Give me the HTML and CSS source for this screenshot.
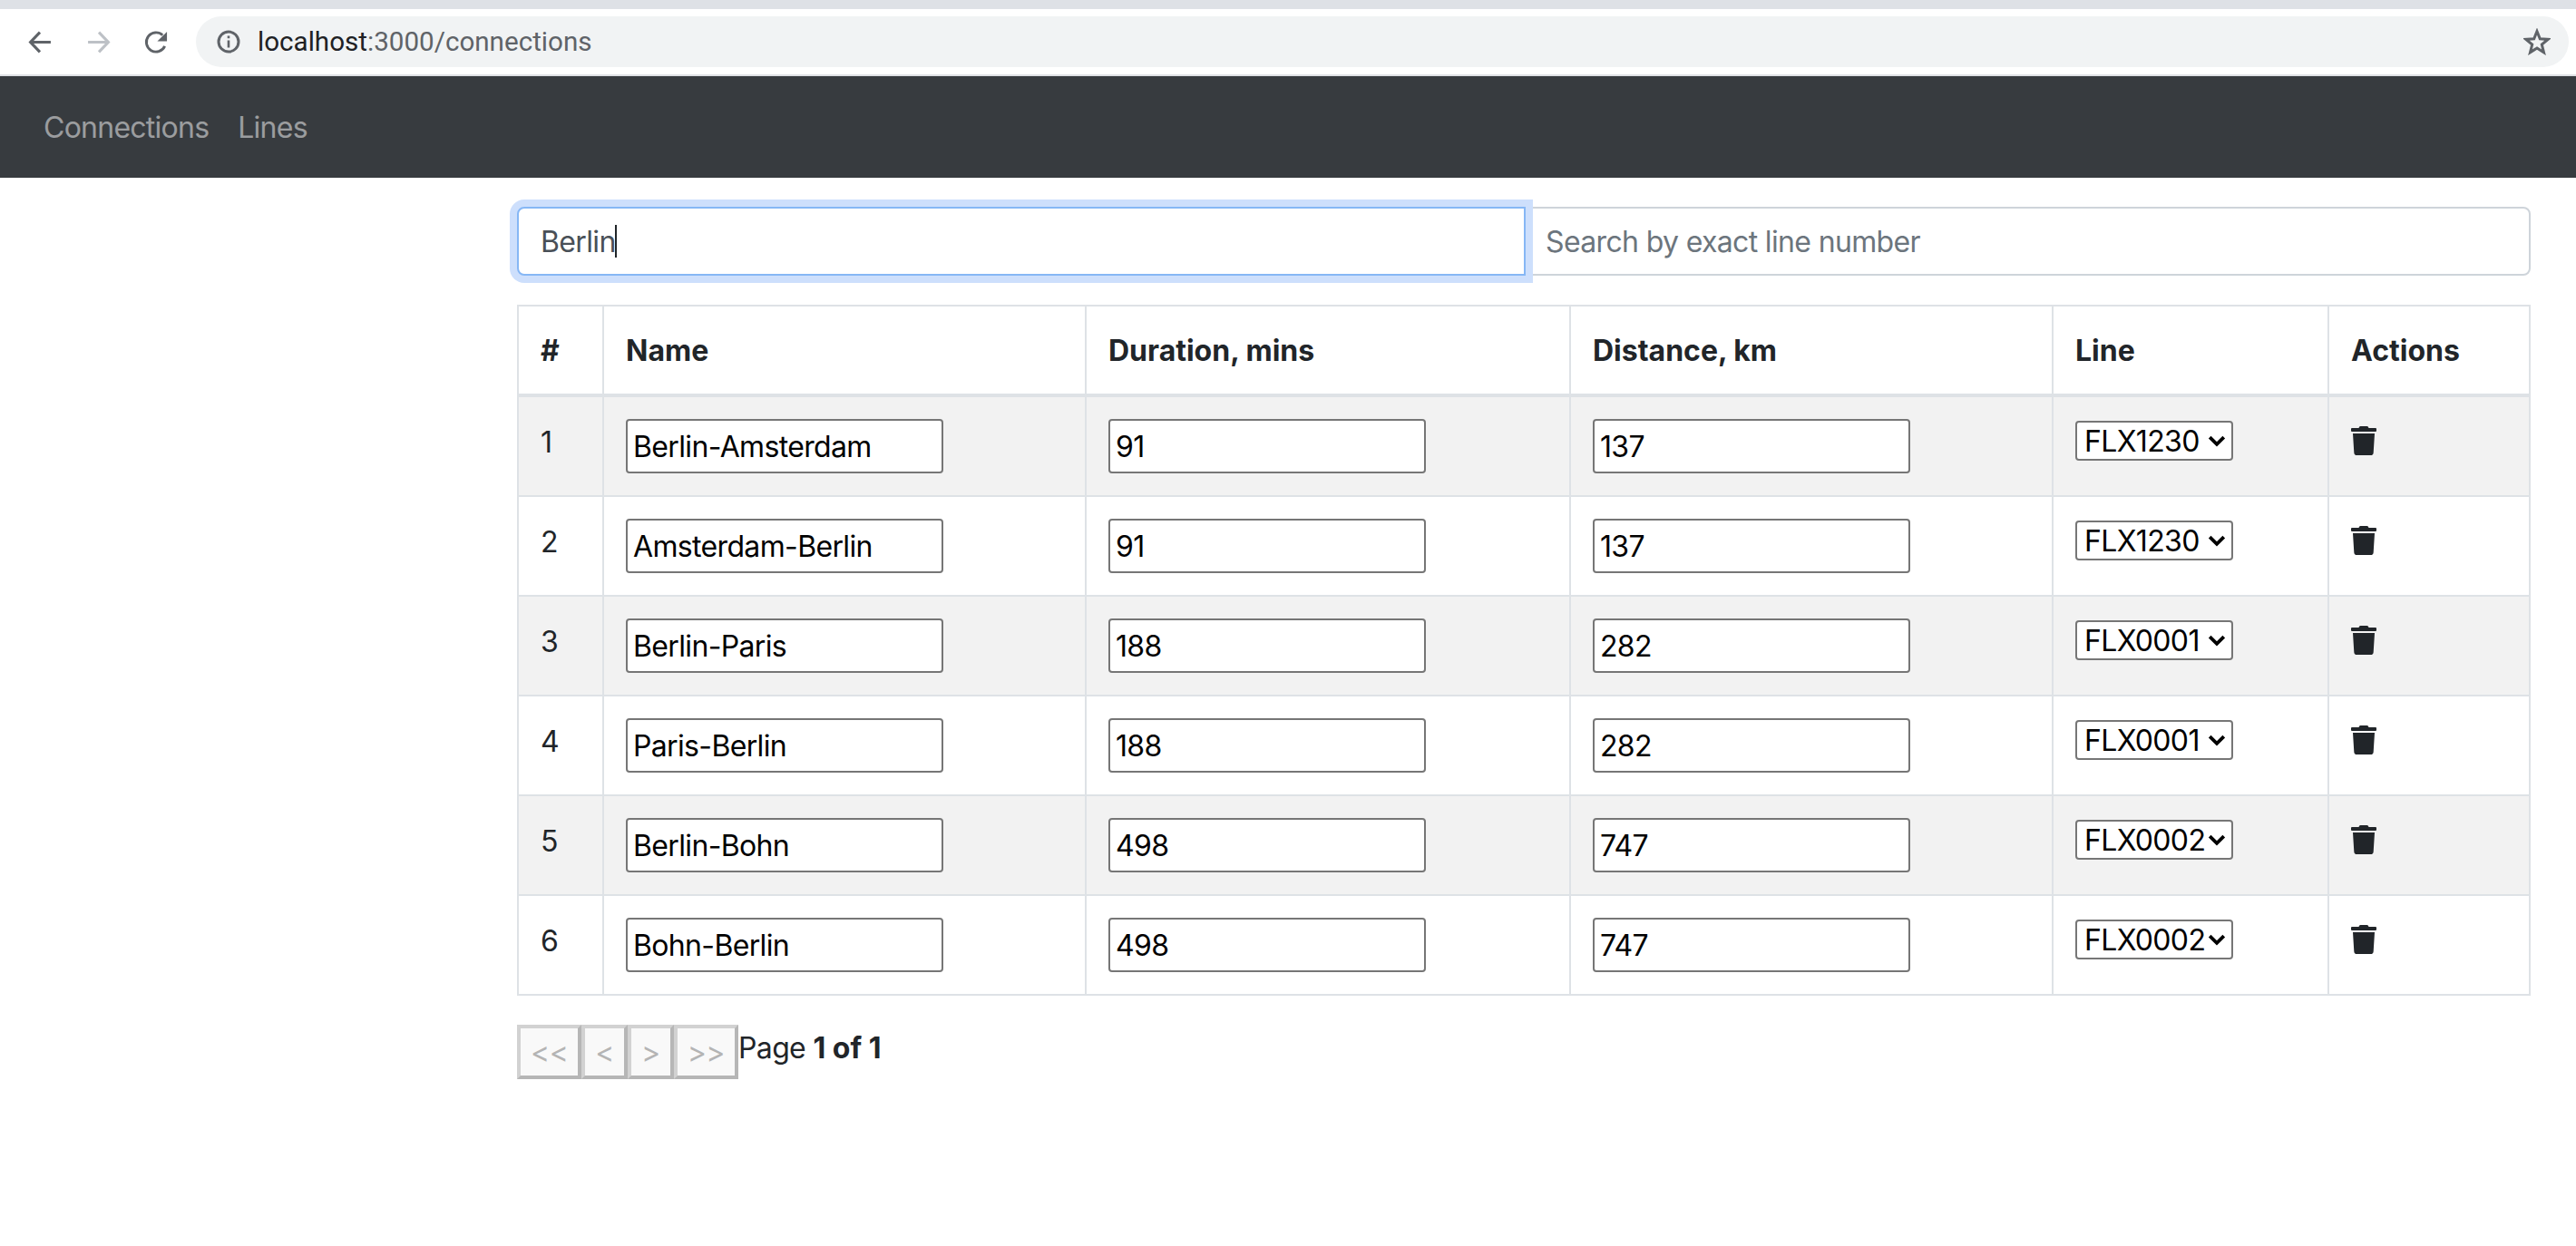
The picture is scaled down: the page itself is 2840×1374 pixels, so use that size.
FILE: index.html
```html
<!DOCTYPE html>
<html lang="en">
<head>
<meta charset="utf-8">
<title>Connections</title>
<link rel="stylesheet" href="styles.css">
</head>
<body>
<header class="browser">
  <div class="tabstrip"></div>
  <div class="toolbar">
    <svg class="tool" viewBox="0 0 26 26"><path d="M24 13H3M12.5 2.5 2.5 13l10 10.500" fill="none" stroke="#5f6368" stroke-width="3"/></svg>
    <svg class="tool" viewBox="0 0 26 26"><path d="M2 13h21M13.500 2.500 23.500 13l-10 10.500" fill="none" stroke="#bdc1c6" stroke-width="3"/></svg>
    <svg class="tool" viewBox="0 0 28 28"><path d="M23.500 18.500A11 11 0 1 1 21 6" fill="none" stroke="#5f6368" stroke-width="3"/><path d="M26 2v11H15z" fill="#5f6368"/></svg>
    <div class="omnibox">
      <svg class="info" viewBox="0 0 26 26"><circle cx="13" cy="13" r="11" fill="none" stroke="#5f6368" stroke-width="3"/><path d="M11.700 11.500h2.600v8h-2.600zM11.700 6.500h2.600v2.700h-2.600z" fill="#5f6368"/></svg>
      <span class="url"><span class="host">localhost</span>:3000/connections</span>
      <svg class="star" viewBox="0 0 30 30"><path d="M15 3.500 18.300 11.800l8.900.6-6.900 5.700 2.200 8.700L15 22l-7.500 4.800 2.200-8.700-6.900-5.700 8.900-.6z" fill="none" stroke="#5f6368" stroke-width="3"/></svg>
    </div>
  </div>
</header>
<nav class="navbar">
  <a class="nav-link">Connections</a>
  <a class="nav-link">Lines</a>
</nav>
<main class="content">
  <div class="search">
    <div class="search-focus">
      <input class="search-input focused" type="text" value="Berlin" placeholder="Search by name">
      <span class="caret"></span>
    </div>
    <input class="search-input" type="text" value="" placeholder="Search by exact line number">
  </div>
  <table class="grid">
    <colgroup>
      <col class="c-num"><col class="c-name"><col class="c-dur"><col class="c-dist"><col class="c-line"><col class="c-act">
    </colgroup>
    <thead>
      <tr><th>#</th><th>Name</th><th>Duration, mins</th><th>Distance, km</th><th>Line</th><th>Actions</th></tr>
    </thead>
    <tbody id="rows">
      <tr>
        <td>1</td>
        <td><input class="cell-input" value="Berlin-Amsterdam"></td>
        <td><input class="cell-input" value="91"></td>
        <td><input class="cell-input" value="137"></td>
        <td><div class="select-wrap"><select class="cell-select"><option>FLX1230</option></select><svg class="chev" viewBox="0 0 18 12"><path d="M2 2.500 9 9.500l7-7" fill="none" stroke="#000" stroke-width="3.400"/></svg></div></td>
        <td><svg class="trash" viewBox="0 0 448 512"><path d="M432 32H312l-9.400-18.700A24 24 0 0 0 281.100 0H166.800a23.720 23.720 0 0 0-21.400 13.300L136 32H16A16 16 0 0 0 0 48v32a16 16 0 0 0 16 16h416a16 16 0 0 0 16-16V48a16 16 0 0 0-16-16zM53.200 467a48 48 0 0 0 47.900 45h245.800a48 48 0 0 0 47.900-45L416 128H32z"/></svg></td>
      </tr>
      <tr>
        <td>2</td>
        <td><input class="cell-input" value="Amsterdam-Berlin"></td>
        <td><input class="cell-input" value="91"></td>
        <td><input class="cell-input" value="137"></td>
        <td><div class="select-wrap"><select class="cell-select"><option>FLX1230</option></select><svg class="chev" viewBox="0 0 18 12"><path d="M2 2.500 9 9.500l7-7" fill="none" stroke="#000" stroke-width="3.400"/></svg></div></td>
        <td><svg class="trash" viewBox="0 0 448 512"><path d="M432 32H312l-9.400-18.700A24 24 0 0 0 281.100 0H166.800a23.720 23.720 0 0 0-21.400 13.300L136 32H16A16 16 0 0 0 0 48v32a16 16 0 0 0 16 16h416a16 16 0 0 0 16-16V48a16 16 0 0 0-16-16zM53.200 467a48 48 0 0 0 47.900 45h245.800a48 48 0 0 0 47.900-45L416 128H32z"/></svg></td>
      </tr>
      <tr>
        <td>3</td>
        <td><input class="cell-input" value="Berlin-Paris"></td>
        <td><input class="cell-input" value="188"></td>
        <td><input class="cell-input" value="282"></td>
        <td><div class="select-wrap"><select class="cell-select"><option>FLX0001</option></select><svg class="chev" viewBox="0 0 18 12"><path d="M2 2.500 9 9.500l7-7" fill="none" stroke="#000" stroke-width="3.400"/></svg></div></td>
        <td><svg class="trash" viewBox="0 0 448 512"><path d="M432 32H312l-9.400-18.700A24 24 0 0 0 281.100 0H166.800a23.720 23.720 0 0 0-21.400 13.300L136 32H16A16 16 0 0 0 0 48v32a16 16 0 0 0 16 16h416a16 16 0 0 0 16-16V48a16 16 0 0 0-16-16zM53.200 467a48 48 0 0 0 47.900 45h245.800a48 48 0 0 0 47.900-45L416 128H32z"/></svg></td>
      </tr>
      <tr>
        <td>4</td>
        <td><input class="cell-input" value="Paris-Berlin"></td>
        <td><input class="cell-input" value="188"></td>
        <td><input class="cell-input" value="282"></td>
        <td><div class="select-wrap"><select class="cell-select"><option>FLX0001</option></select><svg class="chev" viewBox="0 0 18 12"><path d="M2 2.500 9 9.500l7-7" fill="none" stroke="#000" stroke-width="3.400"/></svg></div></td>
        <td><svg class="trash" viewBox="0 0 448 512"><path d="M432 32H312l-9.400-18.700A24 24 0 0 0 281.100 0H166.800a23.720 23.720 0 0 0-21.400 13.300L136 32H16A16 16 0 0 0 0 48v32a16 16 0 0 0 16 16h416a16 16 0 0 0 16-16V48a16 16 0 0 0-16-16zM53.200 467a48 48 0 0 0 47.900 45h245.800a48 48 0 0 0 47.900-45L416 128H32z"/></svg></td>
      </tr>
      <tr>
        <td>5</td>
        <td><input class="cell-input" value="Berlin-Bohn"></td>
        <td><input class="cell-input" value="498"></td>
        <td><input class="cell-input" value="747"></td>
        <td><div class="select-wrap"><select class="cell-select"><option>FLX0002</option></select><svg class="chev" viewBox="0 0 18 12"><path d="M2 2.500 9 9.500l7-7" fill="none" stroke="#000" stroke-width="3.400"/></svg></div></td>
        <td><svg class="trash" viewBox="0 0 448 512"><path d="M432 32H312l-9.400-18.700A24 24 0 0 0 281.100 0H166.800a23.720 23.720 0 0 0-21.400 13.300L136 32H16A16 16 0 0 0 0 48v32a16 16 0 0 0 16 16h416a16 16 0 0 0 16-16V48a16 16 0 0 0-16-16zM53.200 467a48 48 0 0 0 47.900 45h245.800a48 48 0 0 0 47.900-45L416 128H32z"/></svg></td>
      </tr>
      <tr>
        <td>6</td>
        <td><input class="cell-input" value="Bohn-Berlin"></td>
        <td><input class="cell-input" value="498"></td>
        <td><input class="cell-input" value="747"></td>
        <td><div class="select-wrap"><select class="cell-select"><option>FLX0002</option></select><svg class="chev" viewBox="0 0 18 12"><path d="M2 2.500 9 9.500l7-7" fill="none" stroke="#000" stroke-width="3.400"/></svg></div></td>
        <td><svg class="trash" viewBox="0 0 448 512"><path d="M432 32H312l-9.400-18.700A24 24 0 0 0 281.100 0H166.800a23.720 23.720 0 0 0-21.400 13.300L136 32H16A16 16 0 0 0 0 48v32a16 16 0 0 0 16 16h416a16 16 0 0 0 16-16V48a16 16 0 0 0-16-16zM53.200 467a48 48 0 0 0 47.900 45h245.800a48 48 0 0 0 47.900-45L416 128H32z"/></svg></td>
      </tr>
    </tbody>
  </table>
  <div class="pager">
    <button class="page-btn" disabled>&lt;&lt;</button>
    <button class="page-btn" disabled>&lt;</button>
    <button class="page-btn" disabled>&gt;</button>
    <button class="page-btn" disabled>&gt;&gt;</button>
    <span class="page-info">Page <strong>1 of 1</strong></span>
  </div>
</main>
</body>
</html>
```
FILE: styles.css
```css
* { box-sizing: border-box; }
html, body { margin: 0; padding: 0; background: #fff; }
body { width: 2840px; height: 1374px; overflow: hidden; font-family: Inter, "Liberation Sans", sans-serif; font-size: 32px; letter-spacing: -0.65px; color: #212529; }

.tabstrip { height: 10px; background: #dee1e6; }
.toolbar { height: 74px; display: flex; align-items: center; padding: 0 8px 0 31px; background: #fff; border-bottom: 2px solid #dfe1e5; }
.tool { width: 27px; height: 27px; flex: none; margin-right: 37px; }
.tool:nth-child(3) { margin-right: 30px; }
.omnibox { flex: 1; height: 56px; display: flex; align-items: center; padding: 0 20px 0 23px; background: #f1f3f4; border-radius: 28px; }
.info { width: 26px; height: 26px; flex: none; margin-right: 19px; }
.url { flex: 1; font-family: Roboto, sans-serif; font-size: 29.600px; letter-spacing: 0; color: #5f6368; }
.host { color: #202124; }
.star { width: 30px; height: 30px; flex: none; }

.navbar { height: 112px; display: flex; align-items: center; gap: 32px; padding: 0 48px; background: #373b3f; letter-spacing: -0.75px; }
.nav-link { color: rgba(255, 255, 255, .5); }

.content { padding: 32px 50px 0 570px; }
.search { display: flex; height: 76px; margin-bottom: 32px; }
.search-focus { position: relative; z-index: 1; flex: 0 0 1112px; }
.search-input { flex: 1; width: 100%; min-width: 0; height: 76px; margin-left: -2px; padding: 12px 24px 12px 22px; font: inherit; letter-spacing: inherit; color: #495057; background: #fff; border: 2px solid #ced4da; border-radius: 0 8px 8px 0; outline: none; }
.search-input::placeholder { color: #6c757d; opacity: 1; }
.search-input.focused { margin-left: 0; padding-left: 24px; border-color: #86b7f5; border-radius: 8px 0 0 8px; box-shadow: 0 0 0 8px #cddffc; }
.caret { position: absolute; left: 108px; top: 20px; width: 2px; height: 36px; background: #212529; }

.grid { width: 2218px; table-layout: fixed; border-collapse: collapse; }
.c-num { width: 94px; }
.c-name, .c-dist { width: 532px; }
.c-dur { width: 534px; }
.c-line { width: 304px; }
.c-act { width: 222px; }
.grid th, .grid td { padding: 24px; line-height: 48px; text-align: left; vertical-align: top; border: 2px solid #dee2e6; }
.grid th { padding-top: 25px; padding-bottom: 23px; font-weight: 700; letter-spacing: 0; border-bottom-width: 4px; }
.grid td:first-child { padding-top: 26px; padding-bottom: 22px; }
.grid tbody tr:nth-child(odd) { background: #f2f2f2; }

.cell-input { display: block; width: 350px; height: 60px; padding: 2px 6px; font: inherit; letter-spacing: inherit; line-height: normal; color: #000; background: #fff; border: 2px solid #767676; border-radius: 4px; outline: none; }
.select-wrap { position: relative; width: 174px; height: 44px; margin-top: 2px; }
.cell-select { display: block; width: 100%; height: 100%; padding: 0 0 0 8px; appearance: none; font: inherit; letter-spacing: inherit; line-height: normal; color: #000; background: #fff; border: 2px solid #767676; border-radius: 4px; outline: none; }
.chev { position: absolute; right: 8px; top: 15px; width: 20px; height: 14px; pointer-events: none; }
.trash { display: block; width: 28px; height: 32px; margin-top: 8px; fill: #212529; }

.pager { display: flex; align-items: flex-start; margin-top: 32px; }
.page-btn { height: 60px; padding: 2px 11px; font: inherit; letter-spacing: -0.5px; color: #b4b4b4; background: #f9f9f9; border-width: 4px; border-style: solid; border-color: #d2d2d2 #b6b6b6 #b6b6b6 #d2d2d2; }
.page-info { padding-top: 2px; line-height: 48px; }
.page-info strong { font-weight: 700; letter-spacing: 0; }
```
